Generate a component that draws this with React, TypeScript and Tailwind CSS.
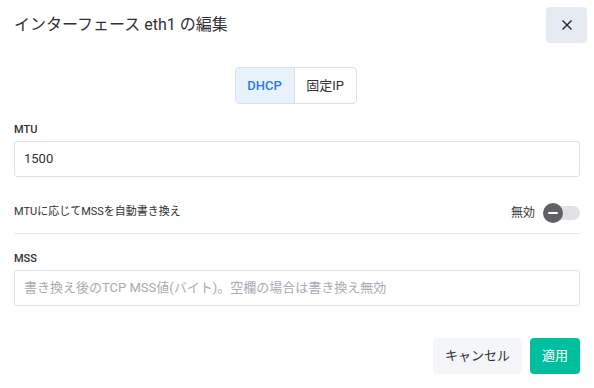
import React from 'react';

const jp = { fontFamily: 'Roboto, "Noto Sans CJK JP", sans-serif' };

const App: React.FC = () => {
  return (
    <div className="w-[594px] h-[388px] bg-white text-[#303133] relative" style={jp}>
      <div className="flex items-center justify-between pl-[14px] pr-[7px] pt-[7px]">
        <h2 className="text-[16px] leading-[36px] text-[#303133]">インターフェース eth1 の編集</h2>
        <button className="w-[41px] h-[36px] rounded-[4px] bg-[#e6eaf2] flex items-center justify-center">
          <svg width="12" height="12" viewBox="0 0 12 12" fill="none" stroke="#222" strokeWidth="1.4">
            <path d="M1.5 1.5l9 9M10.5 1.5l-9 9" />
          </svg>
        </button>
      </div>

      <div className="flex justify-center mt-[24px] pr-[3px]">
        <div className="flex h-[37px] border border-[#dcdfe6] rounded-[4px] overflow-hidden text-[13px]">
          <div className="w-[59px] flex items-center justify-center bg-[#e7f2fd] text-[#2a7ae2] font-medium border-r border-[#dcdfe6]">DHCP</div>
          <div className="w-[61px] flex items-center justify-center text-[#303133]">固定IP</div>
        </div>
      </div>

      <div className="px-[14px]">
        <div className="mt-[19px] text-[11px] font-medium text-[#303133] leading-[14px]">MTU</div>
        <div className="mt-[4px] h-[36px] border border-[#dcdfe6] rounded-[3px] flex items-center px-[9px] text-[13px] text-[#303133]">1500</div>

        <div className="mt-[20px] flex items-center justify-between h-[37px] border-b border-[#e4e7ed] pb-[5px]">
          <span className="text-[11px] text-[#303133]">MTUに応じてMSSを自動書き換え</span>
          <div className="flex items-center gap-[9px]">
            <span className="text-[12px] text-[#303133]">無効</span>
            <div className="relative w-[36px] h-[14px] rounded-full bg-[#dfe1e4]">
              <div className="absolute left-[-1px] top-[-3px] w-[20px] h-[20px] rounded-full bg-[#5f6166] flex items-center justify-center">
                <div className="w-[10px] h-[2px] bg-white rounded" />
              </div>
            </div>
          </div>
        </div>

        <div className="mt-[18px] text-[11px] font-medium text-[#303133] leading-[14px]">MSS</div>
        <div className="mt-[4px] h-[36px] border border-[#dcdfe6] rounded-[3px] flex items-center px-[9px] text-[13px] text-[#a8abb2]">
          書き換え後のTCP MSS値(バイト)。空欄の場合は書き換え無効
        </div>

        <div className="mt-[32px] flex justify-end gap-[8px]">
          <button className="w-[89px] h-[36px] rounded-[4px] bg-[#f4f6fa] text-[13px] text-[#303133]">キャンセル</button>
          <button className="w-[50px] h-[36px] rounded-[4px] bg-[#00bf9e] text-[13px] text-white">適用</button>
        </div>
      </div>
    </div>
  );
};

export default App;
